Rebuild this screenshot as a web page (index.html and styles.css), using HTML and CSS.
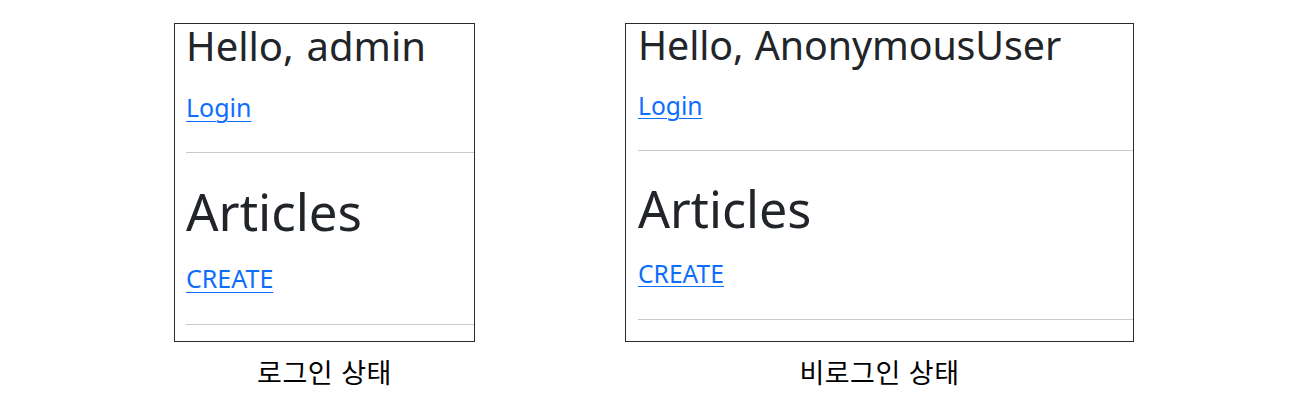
FILE: index.html
```html
<!DOCTYPE html>
<html lang="ko">
<head>
<meta charset="utf-8">
<title>로그인 상태 비교</title>
<link rel="stylesheet" href="styles.css">
</head>
<body>
<main class="compare">
  <section class="frame frame--login">
    <h3 class="greeting">Hello, admin</h3>
    <p class="nav"><a href="#">Login</a></p>
    <hr class="rule">
    <h1 class="title">Articles</h1>
    <p class="action"><a href="#">CREATE</a></p>
    <hr class="rule">
  </section>
  <section class="frame frame--anon">
    <h3 class="greeting">Hello, AnonymousUser</h3>
    <p class="nav"><a href="#">Login</a></p>
    <hr class="rule">
    <h1 class="title">Articles</h1>
    <p class="action"><a href="#">CREATE</a></p>
    <hr class="rule">
  </section>
  <p class="caption">로그인 상태</p>
  <p class="caption">비로그인 상태</p>
</main>
</body>
</html>
```

FILE: styles.css
```css
* { box-sizing: border-box; }

html, body {
  margin: 0;
  padding: 0;
  background: #ffffff;
}

.compare {
  display: grid;
  grid-template-columns: 301px 509px;
  column-gap: 150px;
  margin: 23px 0 0 174px;
}

.frame {
  border: 1px solid #2b2b2b;
  overflow-x: clip;
  overflow-y: visible;
  padding: 0 0 0 0.44em;
  font-family: "Noto Sans", "Open Sans", sans-serif;
  color: #212529;
}

.frame--login { font-size: 25px; }
.frame--anon { font-size: 24.6px; padding-left: 0.49em; }

.greeting {
  margin: -0.1325em 0 0;
  font-size: 1.6em;
  font-weight: 400;
  line-height: 1.362;
  word-spacing: 0.06em;
  white-space: nowrap;
}

.frame--anon .greeting { word-spacing: 0.03em; letter-spacing: -0.1px; }

.nav,
.action {
  margin: 0.592em 0 0;
  line-height: 1.52;
}

.action { margin-top: 0.7em; }

.nav a,
.action a {
  color: #0d6efd;
  text-decoration: underline;
  text-underline-offset: 0.14em;
  text-decoration-thickness: 1px;
}

.rule {
  margin: 1.08em 0 0.64em;
  border: 0;
  border-top: 1px solid #c8c9ca;
  height: 0;
}

.nav + .rule { margin-top: 1.04em; margin-bottom: 0; }

.title {
  margin: 0.55em 0 0;
  font-size: 2.04em;
  font-weight: 400;
  line-height: 1.19;
}

.caption {
  margin: 14px 0 0;
  text-align: center;
  font-family: "Noto Sans CJK KR", "Noto Sans", sans-serif;
  font-size: 27px;
  font-weight: 400;
  letter-spacing: 0.5px;
  line-height: 1.15;
  color: #000000;
}
```
